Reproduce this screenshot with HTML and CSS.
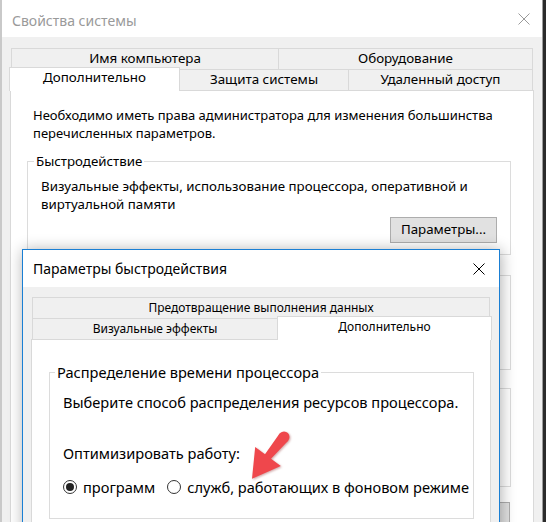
FILE: index.html
```html
<!DOCTYPE html>
<html lang="ru">
<head>
<meta charset="utf-8">
<title>Свойства системы</title>
<link rel="stylesheet" href="styles.css">
</head>
<body>
<div class="win">
  <div class="titlebar">
    <span class="title">Свойства системы</span>
    <svg class="close" width="12" height="12" viewBox="0 0 12 12"><path d="M0.5 0.5L11.5 11.5M11.5 0.5L0.5 11.5" stroke="#9a9a9a" stroke-width="1" fill="none"/></svg>
  </div>
  <div class="tabs o-tabs">
    <div class="tabrow o-row1">
      <div class="tab t-name">Имя компьютера</div>
      <div class="tab t-hw">Оборудование</div>
    </div>
    <div class="tabrow o-row2">
      <div class="tab sel t-adv">Дополнительно</div>
      <div class="tab t-prot">Защита системы</div>
      <div class="tab t-remote">Удаленный доступ</div>
    </div>
  </div>
  <div class="panel o-panel">
    <p class="note">Необходимо иметь права администратора для изменения большинства<br>перечисленных параметров.</p>
    <fieldset class="group g-perf">
      <legend>Быстродействие</legend>
      <p class="txt">Визуальные эффекты, использование процессора, оперативной и<br>виртуальной памяти</p>
      <div class="btnrow"><div class="btn">Параметры...</div></div>
    </fieldset>
    <div class="box g-prof"></div>
    <div class="box g-boot"></div>
    <div class="btnrow envrow"><div class="btn btn-env"></div></div>
  </div>
</div>

<div class="dialog">
  <div class="d-titlebar">
    <span class="d-title">Параметры быстродействия</span>
    <svg class="d-close" width="12" height="12" viewBox="0 0 12 12"><path d="M0.5 0.5L11.5 11.5M11.5 0.5L0.5 11.5" stroke="#000" stroke-width="1" fill="none"/></svg>
  </div>
  <div class="tabs d-tabs">
    <div class="tabrow d-row1">
      <div class="tab t-dep">Предотвращение выполнения данных</div>
    </div>
    <div class="tabrow d-row2">
      <div class="tab t-vis">Визуальные эффекты</div>
      <div class="tab sel t-dadv">Дополнительно</div>
    </div>
  </div>
  <div class="panel d-panel">
    <fieldset class="group g-cpu">
      <legend>Распределение времени процессора</legend>
      <p class="txt">Выберите способ распределения ресурсов процессора.</p>
      <p class="txt opt">Оптимизировать работу:</p>
      <div class="radios">
        <span class="radio checked"></span><span class="rlabel">программ</span>
        <span class="radio r2"></span><span class="rlabel">служб, работающих в фоновом режиме</span>
      </div>
    </fieldset>
  </div>
</div>

<svg class="arrow" width="60" height="65" viewBox="0 0 60 65">
  <circle cx="44" cy="12" r="5.5" fill="#ef474c"/>
  <polygon points="39.6,8.4 25,29.2 15.2,22 12,53.8 40.8,41 31,33.8 48.4,15.6" fill="#ef474c"/>
</svg>
</body>
</html>
```

FILE: styles.css
```css
html, body {
  margin: 0;
  height: 522px;
  overflow: hidden;
}
body {
  background: #2b2b2b;
  font-family: "Noto Sans", sans-serif;
  font-size: 14px;
  color: #000;
}

.win {
  width: 543px;
  height: 522px;
  box-sizing: border-box;
  border-left: 2px solid #c9c9c9;
  border-right: 1px solid #9c9c9c;
  background: #f0f0f0;
}

.titlebar {
  height: 37px;
  background: #fff;
  display: flex;
  align-items: center;
  justify-content: space-between;
  padding: 0 12px 0 10px;
}
.title {
  color: #9a9a9a;
  font-size: 14px;
  padding-top: 3px;
}
.close {
  margin-top: 1px;
}

/* tabs */
.tabs {
  display: flex;
  flex-direction: column;
  margin-top: 11px;
}
.o-tabs {
  font-size: 13.4px;
}
.tabrow {
  display: flex;
  align-items: flex-end;
  height: 21px;
}
.tab {
  box-sizing: border-box;
  height: 21px;
  border-top: 1px solid #d9d9d9;
  border-right: 1px solid #d9d9d9;
  background: #f0f0f0;
  text-align: center;
  line-height: 19px;
  white-space: nowrap;
}
.tab:first-child {
  border-left: 1px solid #d9d9d9;
}
.tab.sel {
  height: 24px;
  margin-bottom: -1px;
  background: #fff;
  position: relative;
  z-index: 1;
}

.o-row1 { margin-left: 9px; }
.o-row2 { margin-left: 7px; }
.t-name { width: 268px; }
.t-hw { width: 254px; }
.t-adv { width: 171px; }
.t-prot { width: 169px; }
.t-remote { width: 184px; }

.panel {
  box-sizing: border-box;
  background: #fff;
  border: 1px solid #d9d9d9;
}
.o-panel {
  margin-left: 8px;
  width: 524px;
  height: 460px;
  padding: 15px 0 0 16px;
  font-size: 13.3px;
}
.note {
  margin: 0 0 0 6px;
  line-height: 18px;
  font-size: 13px;
}

.group {
  box-sizing: border-box;
  border: 1px solid #dcdcdc;
  margin: 0;
  min-width: 0;
}
.group legend {
  padding: 0 2px;
  line-height: 18px;
}
.txt {
  margin: 0;
  line-height: 18px;
}

.g-perf {
  width: 484px;
  margin-top: 10px;
  padding: 7px 13px 11px 13px;
}
.g-perf legend {
  margin-left: -7px;
}
.btnrow {
  display: flex;
  justify-content: flex-end;
  margin-top: 4px;
}
.btn {
  box-sizing: border-box;
  width: 107px;
  height: 26px;
  background: #e1e1e1;
  border: 1px solid #adadad;
  text-align: center;
  line-height: 23px;
}

.box {
  box-sizing: border-box;
  width: 484px;
  border: 1px solid #dcdcdc;
}
.g-prof {
  margin-top: 20px;
  height: 95px;
}
.g-boot {
  margin-top: 18px;
  height: 99px;
}
.envrow {
  width: 484px;
  margin-top: 15px;
}
.btn-env {
  width: 150px;
  margin-right: 1px;
}

/* dialog */
.dialog {
  position: absolute;
  left: 22px;
  top: 249px;
  width: 478px;
  height: 290px;
  box-sizing: border-box;
  border: 1px solid #1a7fd4;
  background: #f0f0f0;
  box-shadow: 1px 1px 14px rgba(0, 0, 0, 0.32);
}
.d-titlebar {
  height: 37px;
  background: #fff;
  display: flex;
  align-items: center;
  justify-content: space-between;
  padding: 0 14px 0 10px;
}
.d-title {
  font-size: 14px;
}
.d-tabs {
  margin-top: 10px;
  font-size: 12px;
}
.d-row1, .d-row2 { margin-left: 9px; }
.t-dep { width: 458px; }
.t-vis { width: 246px; }
.t-dadv {
  width: 215px;
  margin-left: -1px;
  border-left: 1px solid #d9d9d9;
}
.d-panel {
  margin-left: 8px;
  width: 460px;
  height: 200px;
  padding: 23px 0 0 17px;
  font-size: 14.6px;
}
.g-cpu {
  width: 425px;
  padding: 12px 12px 22px 13px;
}
.g-cpu legend {
  margin-left: -8px;
}
.opt {
  margin-top: 33px;
}
.radios {
  display: flex;
  align-items: center;
  margin-top: 16px;
  height: 18px;
}
.radio {
  box-sizing: border-box;
  width: 14px;
  height: 14px;
  border: 1px solid #333;
  border-radius: 50%;
  background: #fff;
  display: flex;
  align-items: center;
  justify-content: center;
  flex: none;
}
.radio.checked::after {
  content: "";
  width: 8px;
  height: 8px;
  border-radius: 50%;
  background: #222;
}
.rlabel {
  margin-left: 6px;
  line-height: 18px;
  white-space: nowrap;
}
.r2 {
  margin-left: 12px;
}

.arrow {
  position: absolute;
  left: 240px;
  top: 425px;
  filter: drop-shadow(1px 1px 1px rgba(120, 0, 0, 0.35));
}
```
